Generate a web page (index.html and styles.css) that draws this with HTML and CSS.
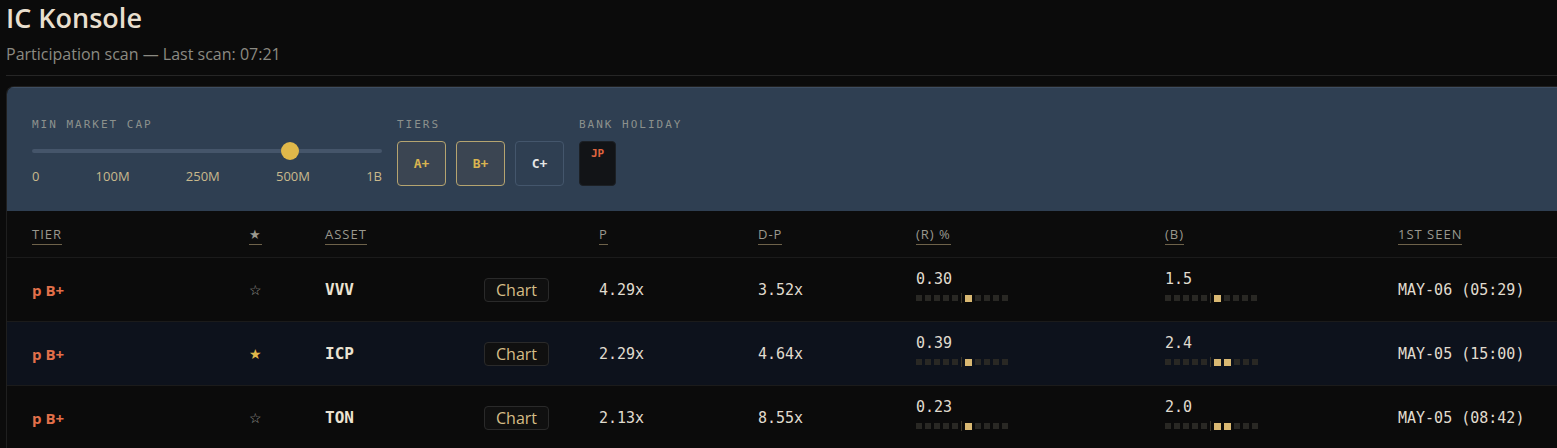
FILE: index.html
```html
<!DOCTYPE html>
<html lang="en">
<head>
  <meta charset="UTF-8" />
  <meta name="viewport" content="width=device-width, initial-scale=1.0"/>
  <title>IC Konsole</title>
  <link rel="stylesheet" href="styles.css">
</head>
<body>

  <header class="page-head">
    <h1>IC Konsole</h1>
    <p class="subtitle">Participation scan — Last scan: 07:21</p>
  </header>

  <div class="board">
    <section class="filters">
      <div class="filter cap-filter">
        <span class="filter-label">MIN MARKET CAP</span>
        <div class="slider">
          <div class="track"></div>
          <div class="thumb"></div>
        </div>
        <div class="ticks">
          <span>0</span><span>100M</span><span>250M</span><span>500M</span><span>1B</span>
        </div>
      </div>

      <div class="filter">
        <span class="filter-label">TIERS</span>
        <div class="tier-buttons">
          <button class="tier-btn active">A+</button>
          <button class="tier-btn active">B+</button>
          <button class="tier-btn">C+</button>
        </div>
      </div>

      <div class="filter">
        <span class="filter-label">BANK HOLIDAY</span>
        <div class="holiday">JP</div>
      </div>
    </section>

    <div class="grid head">
      <span><u>TIER</u></span>
      <span><u>★</u></span>
      <span><u>ASSET</u></span>
      <span></span>
      <span><u>P</u></span>
      <span><u>D-P</u></span>
      <span><u>(R) %</u></span>
      <span><u>(B)</u></span>
      <span><u>1ST SEEN</u></span>
    </div>

    <div class="grid row">
      <span class="tier">p B+</span>
      <span class="star">☆</span>
      <span class="asset">VVV</span>
      <span><button class="chart-btn">Chart</button></span>
      <span class="num">4.29x</span>
      <span class="num">3.52x</span>
      <div class="meter">
        <span class="num">0.30</span>
        <div class="cells"><i></i><i></i><i></i><i></i><i></i><b></b><i class="on"></i><i></i><i></i><i></i><i></i></div>
      </div>
      <div class="meter">
        <span class="num">1.5</span>
        <div class="cells"><i></i><i></i><i></i><i></i><i></i><b></b><i class="on"></i><i></i><i></i><i></i><i></i></div>
      </div>
      <span class="num">MAY-06 (05:29)</span>
    </div>

    <div class="grid row alt">
      <span class="tier">p B+</span>
      <span class="star fav">★</span>
      <span class="asset">ICP</span>
      <span><button class="chart-btn">Chart</button></span>
      <span class="num">2.29x</span>
      <span class="num">4.64x</span>
      <div class="meter">
        <span class="num">0.39</span>
        <div class="cells"><i></i><i></i><i></i><i></i><i></i><b></b><i class="on"></i><i></i><i></i><i></i><i></i></div>
      </div>
      <div class="meter">
        <span class="num">2.4</span>
        <div class="cells"><i></i><i></i><i></i><i></i><i></i><b></b><i class="on"></i><i class="on"></i><i></i><i></i><i></i></div>
      </div>
      <span class="num">MAY-05 (15:00)</span>
    </div>

    <div class="grid row">
      <span class="tier">p B+</span>
      <span class="star">☆</span>
      <span class="asset">TON</span>
      <span><button class="chart-btn">Chart</button></span>
      <span class="num">2.13x</span>
      <span class="num">8.55x</span>
      <div class="meter">
        <span class="num">0.23</span>
        <div class="cells"><i></i><i></i><i></i><i></i><i></i><b></b><i class="on"></i><i></i><i></i><i></i><i></i></div>
      </div>
      <div class="meter">
        <span class="num">2.0</span>
        <div class="cells"><i></i><i></i><i></i><i></i><i></i><b></b><i class="on"></i><i class="on"></i><i></i><i></i><i></i></div>
      </div>
      <span class="num">MAY-05 (08:42)</span>
    </div>
  </div>

</body>
</html>
```

FILE: styles.css
```css
:root {
  --bg: #0b0b0b;
  --panel: #2f3f52;
  --text: #e4dccb;
  --muted: #8b8a82;
  --gold: #e0b84a;
  --tan: #d6bd86;
  --red: #e2704a;
  --mono: 'DejaVu Sans Mono', 'Liberation Mono', monospace;
}
* {
  box-sizing: border-box;
}
html, body {
  overflow: hidden;
}
body {
  margin: 0;
  padding: 0 0 0 6px;
  background: var(--bg);
  color: var(--text);
  font-family: 'Open Sans', sans-serif;
}
.page-head {
  border-bottom: 1px solid #262626;
  width: 1700px;
  padding-bottom: 11px;
}
.page-head h1 {
  margin: 0;
  padding-top: 1px;
  font-size: 27px;
  font-weight: 600;
  line-height: 34px;
  color: #e8dfce;
}
.subtitle {
  margin: 9px 0 0;
  font-size: 16px;
  line-height: 20px;
  color: var(--muted);
}
.board {
  width: 1700px;
  margin-top: 10px;
  border: 1px solid #1f1f1f;
  border-right: none;
  border-radius: 8px 0 0 0;
  overflow: hidden;
}

/* filter panel */
.filters {
  background: var(--panel);
  border-top: 1px solid #3e4e62;
  display: flex;
  gap: 15px;
  padding: 29px 25px 25px;
  height: 124px;
}
.filter {
  display: flex;
  flex-direction: column;
}
.filter-label {
  font-family: var(--mono);
  font-size: 11px;
  letter-spacing: 2px;
  color: #8c918d;
  line-height: 16px;
}
.cap-filter {
  width: 350px;
}
.slider {
  position: relative;
  height: 18px;
  margin-top: 9px;
}
.track {
  position: absolute;
  left: 0;
  right: 0;
  top: 7px;
  height: 4px;
  border-radius: 2px;
  background: #45556a;
}
.thumb {
  position: absolute;
  left: 249px;
  top: 0;
  width: 18px;
  height: 18px;
  border-radius: 50%;
  background: var(--gold);
}
.ticks {
  display: flex;
  justify-content: space-between;
  margin-top: 7px;
  font-size: 13px;
  color: #c9b98c;
}
.tier-buttons {
  display: flex;
  gap: 10px;
  margin-top: 8px;
}
.tier-btn {
  width: 49px;
  height: 45px;
  border: 1px solid #44566c;
  border-radius: 4px;
  background: #2f3f52;
  color: #e6e6e6;
  font-family: var(--mono);
  font-size: 13px;
  font-weight: bold;
}
.tier-btn.active {
  border-color: #b5a470;
  background: #3b4552;
  color: #d9b450;
}
.holiday {
  margin-top: 8px;
  width: 37px;
  height: 45px;
  border-radius: 4px;
  background: #121417;
  border: 1px solid #1c2025;
  color: #e0653f;
  font-family: var(--mono);
  font-size: 11px;
  font-weight: bold;
  text-align: center;
  padding-top: 5px;
}

/* table */
.grid {
  display: grid;
  grid-template-columns: 217px 76px 159px 115px 159px 158px 249px 233px 1fr;
  align-items: center;
  padding-left: 25px;
  border-top: 1px solid #1b1b1b;
}
.head {
  height: 46px;
  border-top: none;
  background: #0c0c0c;
  font-size: 13px;
  letter-spacing: 1px;
  color: #9a988e;
}
.head u {
  text-decoration: none;
  border-bottom: 1px solid #6e624a;
  padding-bottom: 1px;
}
.row {
  height: 64px;
  background: #0b0b0b;
}
.row.alt {
  background: #0d121c;
}
.tier {
  color: var(--red);
  font-weight: 700;
  font-size: 15px;
}
.star {
  color: #9b9b95;
  font-size: 14px;
}
.star.fav {
  color: var(--gold);
}
.asset {
  font-family: var(--mono);
  font-weight: bold;
  font-size: 16px;
  color: #ebe3d2;
}
.chart-btn {
  font-family: 'Open Sans', sans-serif;
  font-size: 16px;
  color: var(--tan);
  background: #101010;
  border: 1px solid #2a2a2a;
  border-radius: 4px;
  padding: 0 11px;
  height: 24px;
  line-height: 20px;
}
.num {
  font-family: var(--mono);
  font-size: 15px;
  color: #e0dccf;
}
.meter {
  display: flex;
  flex-direction: column;
  gap: 5px;
  margin-top: -6px;
}
.cells {
  display: flex;
  align-items: center;
  gap: 3px;
  height: 10px;
}
.cells i {
  display: block;
  width: 6px;
  height: 6px;
  background: #292824;
}
.cells i.on {
  width: 7px;
  height: 7px;
  background: #d9b872;
}
.cells b {
  display: block;
  width: 1px;
  height: 10px;
  background: #3a3528;
}
```
